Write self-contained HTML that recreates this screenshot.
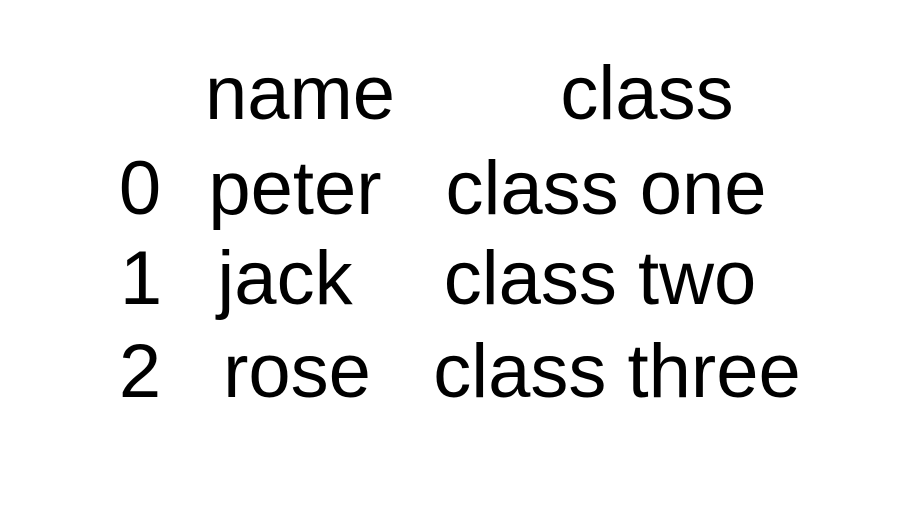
<!DOCTYPE html>
<html><head><style>
html,body{margin:0;padding:0;background:#fff;width:921px;height:518px;overflow:hidden}
span{position:absolute;font-family:"Liberation Sans",sans-serif;font-size:76px;line-height:76px;color:#000;white-space:nowrap;transform:translateX(-50%)}
</style></head><body>
<span style="left:300px;top:56px">name</span>
<span style="left:647px;top:56px">class</span>
<span style="left:140px;top:151px">0</span>
<span style="left:295px;top:151px">peter</span>
<span style="left:606px;top:151px">class one</span>
<span style="left:141px;top:241px">1</span>
<span style="left:285px;top:241px">jack</span>
<span style="left:600px;top:241px">class two</span>
<span style="left:140px;top:334px">2</span>
<span style="left:297px;top:334px">rose</span>
<span style="left:617px;top:334px">class three</span>
</body></html>
